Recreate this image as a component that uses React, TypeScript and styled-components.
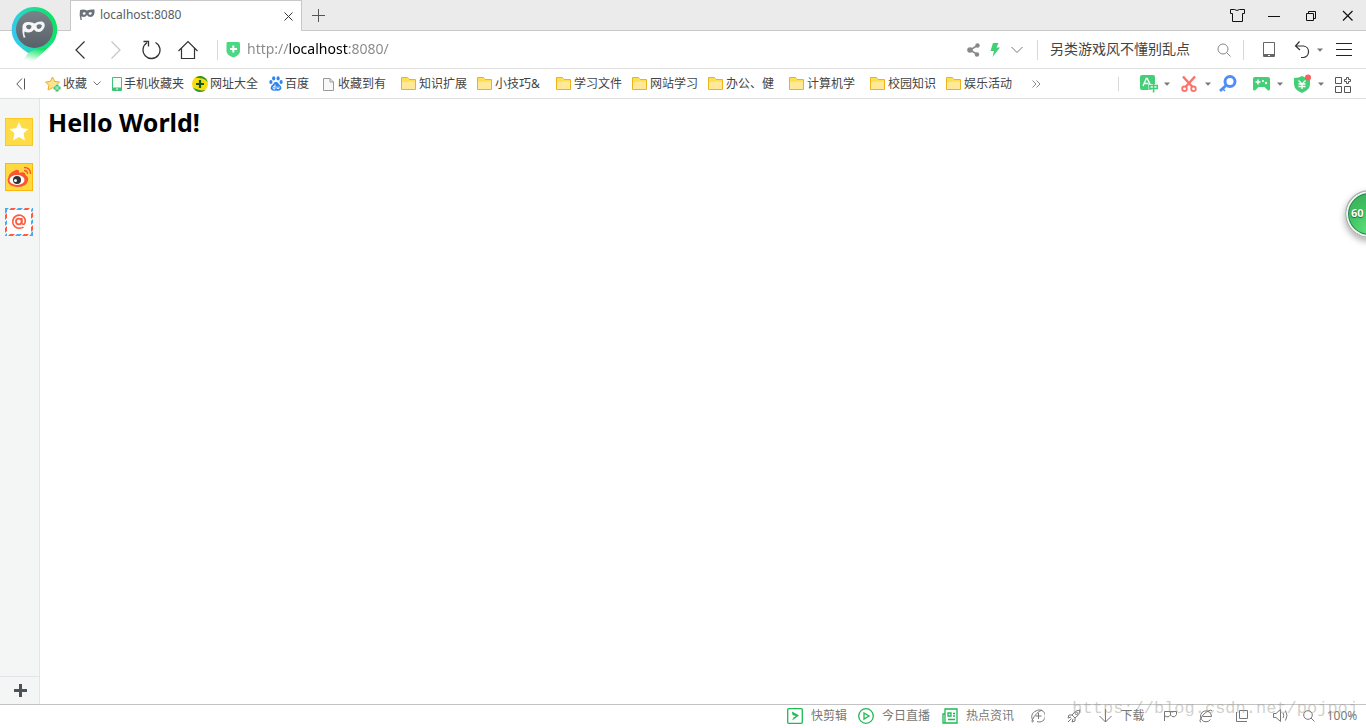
import React from "react";
import styled, { createGlobalStyle, css } from "styled-components";

const GlobalStyle = createGlobalStyle`
  * { box-sizing: border-box; }
  html, body { margin: 0; padding: 0; overflow: hidden; }
  body, button, input, select {
    font-family: "Noto Sans", "Noto Sans CJK SC", sans-serif;
  }
  svg { display: block; flex: none; }
`;

/* ---------- layout ---------- */

const Window = styled.div`
  position: relative;
  display: flex;
  flex-direction: column;
  min-height: 100vh;
  background: #fff;
  overflow: hidden;
`;

const TitleBar = styled.header`
  display: flex;
  height: 31px;
  padding-left: 70px;
  background: #ebebeb;
  box-shadow: inset 0 -1px #c8c8c8;
`;

const Tab = styled.div`
  display: flex;
  align-items: center;
  width: 232px;
  padding: 0 7px 2px 8px;
  background: #fff;
  border: 1px solid #c8c8c8;
  border-bottom: 0;
`;

const TabTitle = styled.span`
  flex: 1;
  margin-left: 5px;
  font-size: 12px;
  line-height: 16px;
  color: #5a5d62;
`;

const Spacer = styled.div`
  flex: 1;
`;

const Gap = styled.span<{ $w: number }>`
  flex: none;
  width: ${(p) => p.$w}px;
`;

const IconButton = styled.button<{ $w: number }>`
  display: flex;
  flex: none;
  align-items: center;
  justify-content: center;
  gap: 6px;
  width: ${(p) => p.$w}px;
  height: 100%;
  padding: 0;
  border: 0;
  background: none;
  color: #333;
`;

const NavBar = styled.div`
  display: flex;
  align-items: center;
  height: 38px;
  padding-left: 62px;
  border-bottom: 1px solid #e0e0e0;
`;

const Divider = styled.span<{ $h: number }>`
  flex: none;
  width: 1px;
  height: ${(p) => p.$h}px;
  background: #d8d8d8;
`;

const AddressBox = styled.label`
  display: flex;
  flex: 1;
  align-items: center;
  gap: 6px;
  min-width: 0;
  padding-left: 8px;
`;

const field = css`
  min-width: 0;
  padding: 0 0 2px;
  border: 0;
  outline: 0;
  background: none;
`;

const AddressInput = styled.input`
  ${field}
  flex: 1;
  font-size: 14px;
  line-height: 22px;
  color: transparent;
  background: linear-gradient(to right, #888 42px, #000 42px 101px, #888 101px);
  background-clip: text;
  -webkit-background-clip: text;
`;

const SearchBox = styled.label`
  display: flex;
  align-items: center;
  width: 205px;
  padding: 0 12px;
`;

const SearchInput = styled.input`
  ${field}
  flex: 1;
  font-size: 14px;
  line-height: 20px;
  color: #444;
`;

const BookmarkBar = styled.nav`
  display: flex;
  align-items: center;
  height: 30px;
  padding-right: 14px;
  border-bottom: 1px solid #e0e0e0;
`;

const Bookmark = styled.a<{ $w: number }>`
  display: flex;
  flex: none;
  align-items: center;
  gap: 2px;
  width: ${(p) => p.$w}px;
  font-size: 12px;
  line-height: 18px;
  white-space: nowrap;
  color: #444;
  text-decoration: none;
`;

const Chevron = styled.span`
  display: flex;
  padding-left: 4px;
`;

const ToolButton = styled.button<{ $w: number }>`
  display: flex;
  flex: none;
  align-items: center;
  gap: 5px;
  width: ${(p) => p.$w}px;
  height: 100%;
  padding: 0;
  border: 0;
  background: none;
`;

const Tools = styled.div`
  display: flex;
  align-items: center;
  height: 100%;
  margin-left: 20px;
`;

const Body = styled.div`
  display: flex;
  flex: 1;
`;

const Sidebar = styled.aside`
  display: flex;
  flex-direction: column;
  gap: 17px;
  width: 40px;
  padding-top: 19px;
  background: #f4f6f6;
  border-right: 1px solid #e2e5e7;
`;

const SideButton = styled.button`
  width: 28px;
  height: 28px;
  margin-left: 5px;
  padding: 0;
  border: 0;
  background: none;
`;

const AddButton = styled.button`
  display: flex;
  align-items: center;
  justify-content: center;
  width: 100%;
  height: 28px;
  margin-top: auto;
  padding: 0 0 0 2px;
  border: 0;
  border-top: 1px solid #e2e4ea;
  background: none;
`;

const Page = styled.main`
  flex: 1;
  padding: 7px 8px;
`;

const Heading = styled.h1`
  margin: 0;
  font-size: 25px;
  line-height: 32px;
  color: #000;
`;

const StatusBar = styled.footer`
  display: flex;
  align-items: center;
  justify-content: flex-end;
  height: 24px;
  padding: 0 5px 2px 0;
  border-top: 1px solid #c3c3c3;
  font-size: 12px;
  line-height: 18px;
  color: #777;
`;

const StatusLink = styled.a<{ $w: number }>`
  display: flex;
  align-items: center;
  gap: 8px;
  width: ${(p) => p.$w}px;
  color: #777;
  text-decoration: none;
  white-space: nowrap;
`;

const StatusButton = styled.button<{ $w: number }>`
  display: flex;
  align-items: center;
  justify-content: center;
  gap: 8px;
  width: ${(p) => p.$w}px;
  padding: 0;
  border: 0;
  background: none;
  font-size: 12px;
  line-height: 18px;
  color: #777;
  white-space: nowrap;
`;

const Logo = styled.div`
  position: absolute;
  top: 6px;
  left: 11px;
`;

const SpeedBall = styled.button`
  position: absolute;
  top: 190px;
  right: -28px;
  width: 49px;
  height: 48px;
  padding: 0 0 2px 5px;
  border: 1px solid #b4b4b4;
  border-radius: 50%;
  background: radial-gradient(circle at 50% 85%, #5fe07d, #41c463 45%, #3cb55c 75%);
  box-shadow: inset 0 0 0 2px #f2f2f2, inset 0 0 0 3px #24834a, 0 3px 7px rgba(0, 0, 0, 0.35);
  font-size: 11px;
  font-weight: 700;
  line-height: 14px;
  text-align: left;
  text-shadow: 0 1px 1px #1d6b35, 0 0 1px #1d6b35;
  color: #fff;
`;

const Watermark = styled.span`
  position: absolute;
  right: 8px;
  bottom: 8px;
  font-family: "Liberation Mono", monospace;
  font-size: 17px;
  line-height: 22px;
  color: rgba(150, 150, 140, 0.45);
  pointer-events: none;
`;

/* ---------- icons ---------- */

type SvgProps = { w: number; h: number; color?: string; sw?: number; children: React.ReactNode };

const Svg = ({ w, h, color = "#333", sw = 1, children }: SvgProps) => (
  <svg width={w} height={h} viewBox={`0 0 ${w} ${h}`} fill="none" stroke={color} strokeWidth={sw} aria-hidden="true">
    {children}
  </svg>
);

const LogoIcon = () => (
  <svg width="48" height="56" viewBox="0 0 48 56" aria-hidden="true">
    <defs>
      <linearGradient id="ring" x1="0" y1="0.6" x2="1" y2="0.4">
        <stop offset="0" stopColor="#35c8f5" />
        <stop offset="0.5" stopColor="#1fdda0" />
        <stop offset="1" stopColor="#0be35f" />
      </linearGradient>
      <linearGradient id="tail" x1="0.7" y1="0" x2="0.3" y2="1">
        <stop offset="0.2" stopColor="#0be35f" />
        <stop offset="1" stopColor="#0be35f" stopOpacity="0" />
      </linearGradient>
      <linearGradient id="disc" x1="0" y1="0" x2="0" y2="1">
        <stop offset="0" stopColor="#7a8389" />
        <stop offset="1" stopColor="#586068" />
      </linearGradient>
    </defs>
    <path d="M40 39 L23 55 H11 L22 41Z" fill="url(#tail)" />
    <path d="M23.500 1 A22.500 22.500 0 0 1 40 39 Q33 44 27 42 L17 47 Q12 44 6 38 A22.500 22.500 0 0 1 23.500 1Z" fill="url(#ring)" />
    <circle cx="23.500" cy="23.500" r="18.500" fill="url(#disc)" />
    <path fillRule="evenodd" fill="#f4f6f7" d="M11.500 20 Q12.500 15.500 18 16 Q21.500 16.300 23.500 17.500 Q27 15 31 15.500 Q34.500 16.500 33.500 21 Q31.500 26 27.500 26 Q24.500 26 23 23.500 Q21 26.500 17.500 26.500 Q15 26.500 13.500 25.500 Q12.500 28 14.500 31.500 L12.500 31.500 Q10.800 26 11.500 20Z M15 20 Q15.500 23.500 18 23.300 Q20.500 23 20.500 20 Q18 17.500 15 20Z M25.500 19.500 Q25.500 23 28 23 Q30.500 22.500 31 19.500 Q28.500 17 25.500 19.500Z" />
  </svg>
);

const TabMask = () => (
  <svg width="16" height="12" viewBox="0 0 16 12" aria-hidden="true">
    <path fillRule="evenodd" fill="#6b7178" d="M1 1 Q5 0 8 1.500 Q11 0 15.500 .500 Q16 8 11.500 8 Q9 8 8 6 Q7 8 4.500 8 Q3 8 2.500 7 Q2 9 3 11 H1.500 Q0 6 1 1Z M3.500 4 Q4 6.200 5.500 5.800 Q7 5.500 6.500 3.500 Q5 3 3.500 4Z M9.500 4 Q10 6.200 11.500 5.800 Q13 5.500 12.800 3.500 Q11 3 9.500 4Z" />
  </svg>
);

const Caret = () => (
  <svg width="6" height="4" viewBox="0 0 6 4" aria-hidden="true">
    <path d="M0 0.500H6L3 3.800Z" fill="#777" />
  </svg>
);

const FolderIcon = () => (
  <Svg w={16} h={14} color="#ecb41c">
    <path d="M.5 .5H6.500L8 2.500H14.500V12.500H.5Z" fill="#ffe999" />
    <path d="M1 1H6.200L7.500 3H14V4.500H6.500L5.500 5H1Z" fill="#ffdf52" stroke="none" />
  </Svg>
);

const StarAddIcon = () => (
  <Svg w={16} h={16} color="#efaa2b">
    <path d="M7.500 1L9.600 5.400L14.500 6L11 9.400L11.800 14L7.500 11.800L3 14L3.900 9.400L.6 6L5.400 5.400Z" fill="#ffe48b" />
    <path d="M12 8V16M8 12H16" stroke="#fff" strokeWidth="4" />
    <path d="M12 8.500V15.500M8.500 12H15.500" stroke="#3fc26e" strokeWidth="3" />
    <path d="M12 10V14M10 12H14" stroke="#b9f3cd" />
  </Svg>
);

const PhoneIcon = () => (
  <Svg w={10} h={16} color="#3fc277">
    <path d="M.5 1.500H9.500V14.500H.5Z" fill="#f4fff8" />
    <path d="M1 12H9V14H1Z" fill="#3fc277" />
    <path d="M4 13H6" stroke="#fff" />
  </Svg>
);

const DirectoryIcon = () => (
  <svg width="16" height="16" viewBox="0 0 16 16" aria-hidden="true">
    <circle cx="8" cy="8" r="8" fill="#f9dc10" />
    <path d="M3 2 Q6 -.5 10 .3 Q14.500 1.800 15.800 6 Q12 2 8 2.200 Q5 1.500 3 2Z M1 11.500 Q4 16.500 9 16 Q12 15.500 13.500 14 Q9 15 6 13.500 Q3 13 1 11.500Z" fill="#2b962f" />
    <path d="M8 4V12M4 8H12" stroke="#0f5c17" strokeWidth="2.200" />
  </svg>
);

const PawIcon = () => (
  <svg width="14" height="15" viewBox="0 0 14 15" aria-hidden="true">
    <g fill="#2c86f2">
      <ellipse cx="1.900" cy="6" rx="1.600" ry="2" />
      <ellipse cx="4.700" cy="2.400" rx="1.600" ry="2.100" />
      <ellipse cx="9.100" cy="2.400" rx="1.600" ry="2.100" />
      <ellipse cx="12.100" cy="6" rx="1.600" ry="2" />
      <path d="M7 5.800 Q9 6 10 8.300 Q13 10.500 12.200 13 Q11 15.500 7 14.500 Q3 15.500 1.800 13 Q1 10.500 4 8.300 Q5 6 7 5.800Z" />
    </g>
    <path d="M6 8.500V13H4.500Q3.500 11.500 4.500 10.500H6M8 10.500V12.500H10V10.500" fill="none" stroke="#fff" strokeWidth=".9" />
  </svg>
);

const FileIcon = () => (
  <Svg w={13} h={14} color="#999">
    <path d="M.5 1.500H7L10.500 5V13.500H.5Z M7 1.500V5H10.500" fill="#f8f8f8" />
  </Svg>
);

const TranslateIcon = () => (
  <Svg w={20} h={18} color="#fff">
    <rect x="1" y="0" width="15" height="15" rx="2" fill="#43cf76" stroke="none" />
    <path d="M4 11L7.300 3.500H8.200L11 9M5 8.500H9.500" strokeWidth="1.400" />
    <path d="M9.500 9H19.500V14.500H16.200V18H13V14.500H9.500Z" fill="#fff" stroke="none" />
    <path d="M10.800 10.500H18.300V13.500H10.800ZM14.600 8.500V17.500" stroke="#43cf76" strokeWidth="1.600" />
  </Svg>
);

const ScissorsIcon = () => (
  <Svg w={20} h={18} color="#ff7169" sw={2.5}>
    <path d="M3 1.500L12.500 12M15 1.500L5.500 12" />
    <circle cx="4.500" cy="13.800" r="2.300" strokeWidth="1.800" />
    <circle cx="13.500" cy="13.800" r="2.300" strokeWidth="1.800" />
  </Svg>
);

const KeyIcon = () => (
  <Svg w={18} h={18} color="#4f8ef7" sw={3}>
    <circle cx="11" cy="6.500" r="5" />
    <path d="M7 10.500L1 16" />
    <path d="M3.500 13.500L6 16" strokeWidth="1.500" />
  </Svg>
);

const GamepadIcon = () => (
  <Svg w={20} h={18} color="#fff">
    <path d="M3 2H16Q18 2 18 4V14Q18 16 16 15.500L12.500 12H6.500L3 15.500Q1 16 1 14V4Q1 2 3 2Z" fill="#43cf76" stroke="none" />
    <path d="M6 4.500V9.500M3.500 7H8.500" strokeWidth="1.500" />
    <circle cx="11" cy="6" r="1" fill="#fff" stroke="none" />
    <circle cx="14" cy="8" r="1.200" fill="#fff" stroke="none" />
  </Svg>
);

const YuanShieldIcon = () => (
  <Svg w={20} h={20} color="#fff">
    <path d="M9 2Q12 4 17 4V10Q17 16 9 19Q1 16 1 10V4Q6 4 9 2Z" fill="#43cf76" stroke="none" />
    <path d="M5.500 6.500L9 10L12.500 6.500M9 10V15M5.500 10H12.500M5.500 12.500H12.500" strokeWidth="1.300" />
    <circle cx="15" cy="3.500" r="3" fill="#ff5f5a" stroke="none" />
  </Svg>
);

const GridIcon = () => (
  <Svg w={18} h={18} color="#555">
    <path d="M1.500 2.500H7.500V8.500H1.500ZM1.500 11.500H7.500V17.500H1.500ZM10.500 11.500H16.500V17.500H10.500Z" />
    <path d="M12.500 2.500H14.500V4.500H16.500V6.500H14.500V8.500H12.500V6.500H10.500V4.500H12.500Z" />
  </Svg>
);

const SafeIcon = () => (
  <Svg w={15} h={16} color="#fff" sw={2}>
    <path d="M1.500 0H12.500Q14 0 14 1.500V9Q14 13 7.500 15.500Q.5 13 .5 9V1.500Q.5 0 1.500 0Z" fill="#4bd884" stroke="none" />
    <path d="M7.300 3.500V10.500M4 7H11" />
  </Svg>
);

const MailIcon = () => (
  <Svg w={28} h={28} color="#ff5a3c" sw={2}>
    <rect width="28" height="28" fill="#fff" stroke="none" />
    <g fill="#ff5a3c" stroke="none">
      <path d="M6 0H11L9 2H4ZM20 0H25L23 2H18ZM5 26H10L8 28H3ZM19 26H24L22 28H17Z" />
      <path d="M0 7L2 5V10L0 12ZM0 20L2 18V23L0 25ZM26 6L28 4V9L26 11ZM26 19L28 17V22L26 24Z" />
    </g>
    <g fill="#45aaf2" stroke="none">
      <path d="M0 0H4L2 2V4L0 6ZM13 0H18L16 2H11ZM12 26H17L15 28H10ZM28 28H24L26 26V25L28 23Z" />
      <path d="M0 14L2 12V16L0 18ZM26 13L28 11V15L26 17ZM0 27L2 25V28H0ZM27 0H28V3L26 4V2Z" />
    </g>
    <circle cx="13.800" cy="13.500" r="2.800" strokeWidth="1.800" />
    <path d="M16.800 10V15Q17.500 17 19.500 15.800Q21.500 12 18.500 8.800Q15 6 11 8Q7 10.500 8 15.500Q9.500 20 14.500 20.300Q17 20.300 18.500 19" strokeWidth="1.600" />
  </Svg>
);

/* ---------- data ---------- */

const bookmarks = [
  { label: "手机收藏夹", w: 80, icon: <PhoneIcon /> },
  { label: "网址大全", w: 77, icon: <DirectoryIcon /> },
  { label: "百度", w: 54, icon: <PawIcon /> },
  { label: "收藏到有", w: 78, icon: <FileIcon /> },
  { label: "知识扩展", w: 76 },
  { label: "小技巧&", w: 79 },
  { label: "学习文件", w: 76 },
  { label: "网站学习", w: 76 },
  { label: "办公、健", w: 81 },
  { label: "计算机学", w: 81 },
  { label: "校园知识", w: 76 },
  { label: "娱乐活动", w: 76 },
];

const tools = [
  { label: "翻译", w: 41, icon: <TranslateIcon />, menu: true },
  { label: "截图", w: 39, icon: <ScissorsIcon />, menu: true },
  { label: "搜索", w: 33, icon: <KeyIcon />, menu: false },
  { label: "游戏", w: 41, icon: <GamepadIcon />, menu: true },
  { label: "网银", w: 41, icon: <YuanShieldIcon />, menu: true },
  { label: "扩展", w: 18, icon: <GridIcon />, menu: false },
];

export default function App() {
  return (
    <>
      <GlobalStyle />
      <Window>
        <TitleBar>
          <Tab>
            <TabMask />
            <TabTitle>localhost:8080</TabTitle>
            <IconButton $w={12} aria-label="关闭标签">
              <Svg w={9} h={11}><path d="M.5 2.500L8.500 10.500M8.500 2.500L.5 10.500" /></Svg>
            </IconButton>
          </Tab>
          <IconButton $w={33} aria-label="新标签">
            <Svg w={13} h={13} color="#555"><path d="M6.500 0V13M0 6.500H13" /></Svg>
          </IconButton>
          <Spacer />
          <IconButton $w={37} aria-label="皮肤">
            <Svg w={16} h={14}><path d="M5.500 .5Q8 2.500 10.500 .5H15.500V4.500H13.500V12.500H3.500V4.500H1.500V.5Z" stroke="#111" /></Svg>
          </IconButton>
          <IconButton $w={37} aria-label="最小化">
            <Svg w={12} h={12} color="#111"><path d="M0 6.500H12" /></Svg>
          </IconButton>
          <IconButton $w={37} aria-label="还原">
            <Svg w={11} h={11} color="#111"><path d="M1.500 3.500H8.500V10.500H1.500ZM3.500 3V1.500H10.500V8.500H9" /></Svg>
          </IconButton>
          <IconButton $w={37} aria-label="关闭">
            <Svg w={11} h={11} color="#111" sw={1.2}><path d="M1 1L10.500 10.500M10.500 1L1 10.500" /></Svg>
          </IconButton>
        </TitleBar>

        <NavBar>
          <IconButton $w={36} aria-label="后退">
            <Svg w={10} h={18} sw={1.2}><path d="M9.500 .5L1 9L9.500 17.500" /></Svg>
          </IconButton>
          <IconButton $w={36} aria-label="前进">
            <Svg w={10} h={18} color="#c4c4c4" sw={1.2}><path d="M.5 .5L9 9L.5 17.500" /></Svg>
          </IconButton>
          <IconButton $w={36} aria-label="刷新">
            <Svg w={20} h={20} sw={1.3}><path d="M13.500 2.500A8.500 8.500 0 1 1 5 2.800M1.500 1.500H6.500V6.500" /></Svg>
          </IconButton>
          <IconButton $w={36} aria-label="主页">
            <Svg w={20} h={20} sw={1.2}><path d="M.5 11L10 1.500L19.500 11M3.500 8.500V18.500H16.500V8.500" /></Svg>
          </IconButton>
          <Gap $w={11} />
          <Divider $h={20} />
          <AddressBox>
            <SafeIcon />
            <AddressInput aria-label="地址" defaultValue="http://localhost:8080/" />
          </AddressBox>
          <IconButton $w={22} aria-label="分享">
            <Svg w={13} h={14} color="#888" sw={1.5}>
              <path d="M10.500 2.500L3 7L10.500 11.500" />
              <g fill="#888" stroke="none"><circle cx="10.500" cy="2.500" r="2.200" /><circle cx="3" cy="7" r="2.800" /><circle cx="10" cy="11.500" r="2.200" /></g>
            </Svg>
          </IconButton>
          <IconButton $w={22} aria-label="极速模式">
            <Svg w={10} h={14}><path d="M3 0H8.500L6.500 4.500H10L2.500 14L4 8H.5Z" fill="#43cf76" stroke="none" /></Svg>
          </IconButton>
          <IconButton $w={22} aria-label="更多">
            <Svg w={12} h={8} color="#777"><path d="M.5 1L6 6.500L11.500 1" /></Svg>
          </IconButton>
          <Gap $w={9} />
          <Divider $h={20} />
          <SearchBox>
            <SearchInput aria-label="搜索" defaultValue="另类游戏风不懂别乱点" />
            <Svg w={14} h={14} color="#888"><circle cx="6" cy="6" r="5" /><path d="M9.500 9.500L13.500 13.500" /></Svg>
          </SearchBox>
          <Divider $h={20} />
          <IconButton $w={50} aria-label="手机">
            <Svg w={13} h={17} color="#666"><path d="M.5 1.500H11.500V15.500H.5Z" /><path d="M1 15H5M7 15H11" strokeWidth="2" /><path d="M1 13.500H11" /></Svg>
          </IconButton>
          <IconButton $w={28} aria-label="撤销">
            <Svg w={17} h={18} sw={1.2}><path d="M5.500 .5L1.500 5L6 9M1.500 5H9.500A5.800 5.800 0 0 1 9.500 16.500H7" /></Svg>
            <Caret />
          </IconButton>
          <IconButton $w={44} aria-label="菜单">
            <Svg w={16} h={14} color="#222"><path d="M0 .5H16M0 6.500H16M0 12.500H16" /></Svg>
          </IconButton>
        </NavBar>

        <BookmarkBar>
          <IconButton $w={41} aria-label="收起">
            <Svg w={10} h={12} color="#555"><path d="M6 .5L.8 6L6 11.500M8.500 .5V11.500" /></Svg>
          </IconButton>
          <Gap $w={4} />
          <Bookmark $w={67} href="#favorites">
            <StarAddIcon />收藏
            <Chevron>
              <Svg w={8} h={5} color="#777"><path d="M.5 .5L4 4L7.500 .5" /></Svg>
            </Chevron>
          </Bookmark>
          {bookmarks.map((b) => (
            <Bookmark key={b.label} $w={b.w} href="#bookmark">
              {b.icon ?? <FolderIcon />}
              {b.label}
            </Bookmark>
          ))}
          <IconButton $w={28} aria-label="更多书签">
            <Svg w={9} h={8} color="#888"><path d="M.5 .5L4 4L.5 7.500M4.500 .5L8 4L4.500 7.500" /></Svg>
          </IconButton>
          <Spacer />
          <Divider $h={14} />
          <Tools>
            {tools.map((t) => (
              <ToolButton key={t.label} $w={t.w} aria-label={t.label}>
                {t.icon}
                {t.menu && <Caret />}
              </ToolButton>
            ))}
          </Tools>
        </BookmarkBar>

        <Body>
          <Sidebar>
            <SideButton aria-label="收藏">
              <Svg w={28} h={28} color="#f9c821">
                <rect x=".5" y=".5" width="27" height="27" fill="#ffdc45" />
                <path d="M14 4L16.800 10.300L23.500 10.900L18.500 15.300L20 22.500L14 19L8 22.500L9.500 15.300L4.500 10.900L11.200 10.300Z" fill="#fff" stroke="none" />
              </Svg>
            </SideButton>
            <SideButton aria-label="微博">
              <Svg w={28} h={28} color="#fbb710">
                <rect x=".5" y=".5" width="27" height="27" fill="#ffd93f" />
                <path d="M2.500 17Q4 9 11 7Q14.500 6 14 10Q20 8 20.500 12Q24 14 23 18Q21 24 12 24Q3 23 2.500 17Z" fill="#fb5533" stroke="none" />
                <ellipse cx="12" cy="17" rx="7.500" ry="5" fill="#fff" stroke="none" />
                <circle cx="12" cy="17" r="4" fill="#333" stroke="none" />
                <circle cx="10.500" cy="17.500" r="1.500" fill="#fff" stroke="none" />
                <path d="M19 4.500Q25.500 4.500 25.500 11M19 7.500Q22.500 7.500 22.500 11" stroke="#fb5533" strokeWidth="1.300" />
              </Svg>
            </SideButton>
            <SideButton aria-label="邮箱">
              <MailIcon />
            </SideButton>
            <AddButton aria-label="添加">
              <Svg w={13} h={13} color="#4c5357" sw={3}><path d="M6.500 0V13M0 6.500H13" /></Svg>
            </AddButton>
          </Sidebar>
          <Page>
            <Heading>Hello World!</Heading>
          </Page>
        </Body>

        <StatusBar>
          <StatusLink $w={71} href="#clip">
            <Svg w={16} h={16} color="#1db954" sw={1.3}>
              <rect x=".7" y=".7" width="14.600" height="14.600" rx="1" />
              <path d="M5 3.500L12 7.500L5 12.500L6.500 9.500L9 8L5.500 7Z" fill="#1db954" stroke="none" />
            </Svg>
            快剪辑
          </StatusLink>
          <StatusLink $w={84} href="#live">
            <Svg w={16} h={16} color="#1db954" sw={1.3}><circle cx="8" cy="8" r="7.300" /><path d="M6 5L11 8L6 11Z" /></Svg>
            今日直播
          </StatusLink>
          <StatusLink $w={79} href="#news">
            <Svg w={16} h={16} color="#1db954" sw={1.3}><path d="M3 1H15V15H1V6H3ZM3 6V15M6 5H9V8H6ZM11 5.500H13M11 8H13M6 11.500H13" /></Svg>
            热点资讯
          </StatusLink>
          <StatusButton $w={34} aria-label="加速">
            <Svg w={14} h={14} color="#777"><path d="M2.500 12A6 6 0 0 1 5 2A6 6 0 1 1 6 12.500M7.500 4V10M4.500 7H10.500M2.500 12.500Q0 14 1.500 10.500Q5 3.500 11 1" /></Svg>
          </StatusButton>
          <StatusButton $w={37} aria-label="修复">
            <Svg w={14} h={14} color="#777"><path d="M13 1Q8 1 5 6L8 9Q13 6 13 1ZM5 6H2L1 9L4 8M8 9V12L5 13L6 10M4.500 9.500L1 13" /><circle cx="9.500" cy="4.500" r="1.200" /></Svg>
          </StatusButton>
          <StatusButton $w={59} aria-label="下载">
            <Svg w={14} h={14} color="#777"><path d="M7.500 0V13M1.500 7L7.500 13L13.500 7" /></Svg>
            下载
          </StatusButton>
          <StatusButton $w={38} aria-label="无痕">
            <Svg w={14} h={12} color="#777"><path d="M1.500 11V1.500H13.500V4.500Q12 8 9 6.500L7.500 5L6 6.500Q4 7.500 2 6M7.500 2V5" /></Svg>
          </StatusButton>
          <StatusButton $w={34} aria-label="内核">
            <Svg w={14} h={14} color="#777"><path d="M4 7.500H12.500A5.500 5.500 0 1 0 11.500 10.500M2 13Q-1 13 4 6Q10 0 13 1.500" /></Svg>
          </StatusButton>
          <StatusButton $w={38} aria-label="分屏">
            <Svg w={13} h={13} color="#777"><path d="M3.500 1.500H11.500V9.500H3.500ZM.5 3V12.500H11" /></Svg>
          </StatusButton>
          <StatusButton $w={38} aria-label="声音">
            <Svg w={15} h={13} color="#777"><path d="M.5 4.500H3L7.500 .5V12.500L3 8.500H.5ZM10 4Q11.500 6.500 10 9M12.500 1.500Q15.500 6.500 12.500 11.500" /></Svg>
          </StatusButton>
          <StatusButton $w={62} aria-label="缩放">
            <Svg w={16} h={12} color="#777"><circle cx="5" cy="5" r="4.300" /><path d="M8 8L11.500 11.500" /></Svg>
            100%
          </StatusButton>
        </StatusBar>

        <Logo><LogoIcon /></Logo>
        <SpeedBall aria-label="加速球">60</SpeedBall>
        <Watermark>https://blog.csdn.net/pojpoj</Watermark>
      </Window>
    </>
  );
}
